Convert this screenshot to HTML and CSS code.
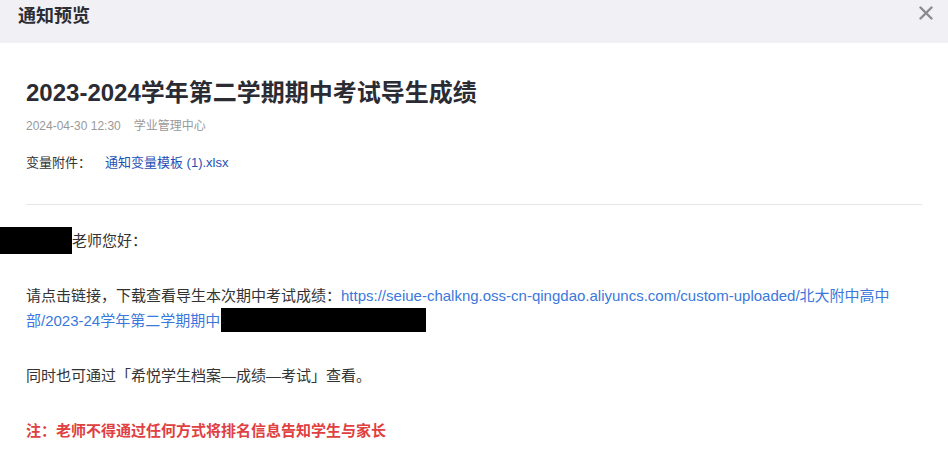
FILE: index.html
```html
<!DOCTYPE html>
<html lang="zh-CN">
<head>
<meta charset="utf-8">
<title>通知预览</title>
<link rel="stylesheet" href="styles.css">
</head>
<body>
<div class="modal">
  <header class="modal-header">
    <span class="modal-title">通知预览</span>
    <button class="close" aria-label="关闭">
      <svg width="14" height="14" viewBox="0 0 14 14"><path d="M1.5 1.5 L12.5 12.5 M12.5 1.5 L1.5 12.5" stroke="#8a8a8f" stroke-width="2.4" stroke-linecap="round"/></svg>
    </button>
  </header>
  <main class="modal-body">
    <h1 class="notice-title">2023-2024学年第二学期期中考试导生成绩</h1>
    <div class="meta"><span>2024-04-30 12:30</span><span>学业管理中心</span></div>
    <div class="attach"><span class="attach-label">变量附件：</span><a class="attach-link">通知变量模板 (1).xlsx</a></div>
    <hr class="divider">
    <div class="content">
      <p class="greet"><span class="redact redact-name"></span>老师您好：</p>
      <p>请点击链接，下载查看导生本次期中考试成绩：<a class="link">https://seiue-chalkng.oss-cn-qingdao.aliyuncs.com/custom-uploaded/北大附中高中部/2023-24学年第二学期期中</a><span class="redact redact-link"></span></p>
      <p>同时也可通过「希悦学生档案—成绩—考试」查看。</p>
      <p class="note">注：老师不得通过任何方式将排名信息告知学生与家长</p>
    </div>
  </main>
</div>
</body>
</html>
```

FILE: styles.css
```css
* { box-sizing: border-box; }
html, body { margin: 0; padding: 0; background: #fff; }
body {
  font-family: "Liberation Sans", "Noto Sans CJK SC", sans-serif;
  color: #333;
  width: 948px;
  height: 464px;
  overflow: hidden;
}
.modal { display: flex; flex-direction: column; }
.modal-header {
  height: 43px;
  background: #f0f0f5;
  display: flex;
  justify-content: space-between;
  align-items: flex-start;
  padding: 3px 15px 0 18px;
}
.modal-title {
  font-size: 18px;
  font-weight: 700;
  color: #2d2d33;
  line-height: 26px;
}
.close {
  border: 0;
  background: none;
  padding: 0;
  margin-top: 3px;
  width: 14px;
  height: 14px;
  display: flex;
}
.modal-body { padding: 32px 26px 0 26px; }
.notice-title {
  margin: 0;
  font-size: 24px;
  line-height: 36px;
  font-weight: 700;
  color: #2b2b33;
}
.meta {
  margin-top: 5px;
  font-size: 12px;
  line-height: 20px;
  color: #999;
  display: flex;
  gap: 13px;
}
.attach {
  margin-top: 17px;
  font-size: 13px;
  line-height: 20px;
  display: flex;
}
.attach-label { width: 79px; color: #333; }
.attach-link { color: #1f4fb5; }
.divider {
  margin: 31px 0 0 0;
  border: 0;
  border-top: 1px solid #e6e6ea;
  height: 0;
}
.content { padding-top: 23px; font-size: 15px; line-height: 25px; color: #333; }
.content p { margin: 0 0 30px 0; }
.link { color: #3a78dd; }
.note { color: #e0403f; font-weight: 700; }
.redact { display: inline-block; background: #000; vertical-align: top; }
.redact-name { width: 72px; height: 27px; margin-left: -26px; margin-top: -1px; margin-bottom: -2px; }
.redact-link { width: 205px; height: 24px; margin-left: 1px; }
```
